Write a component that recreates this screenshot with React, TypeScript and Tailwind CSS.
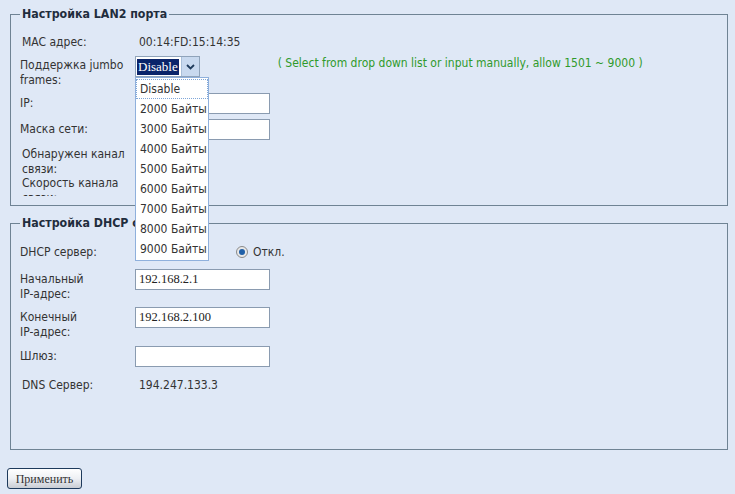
import React from "react";

const labelFont = { fontFamily: '"DejaVu Sans Condensed", "DejaVu Sans", "Liberation Sans", sans-serif' };

function Input({ value }: { value?: string }) {
  return (
    <div className="w-[135px] h-[21px] bg-white border border-[#8a9bb0] flex items-center px-[3px] text-[12.5px] text-[#222] [font-family:'Liberation_Serif',serif]">
      {value}
    </div>
  );
}

export default function App() {
  const options = ["Disable", "2000 Байты", "3000 Байты", "4000 Байты", "5000 Байты", "6000 Байты", "7000 Байты", "8000 Байты", "9000 Байты"];
  return (
    <div
      className="relative w-[735px] h-[494px] bg-[#dfe8f6] text-[#333] text-[12px] overflow-hidden pt-[6px]"
      style={labelFont}
    >
      {/* LAN2 fieldset */}
      <fieldset className="ml-[10px] w-[718px] h-[200px] border border-[#6f8394] pl-[9px] pr-[10px]">
        <legend className="px-[2px] text-[12.3px] font-bold leading-[16px] text-[#1f2d3d] whitespace-nowrap">Настройка LAN2 порта</legend>
        <div className="h-[174px] overflow-hidden pt-[10px]">
          <div className="flex items-center h-[20px] whitespace-nowrap">
            <div className="w-[115px] shrink-0 pl-[2px]">MAC адрес:</div>
            <div className="pl-[4px]">00:14:FD:15:14:35</div>
          </div>
          <div className="flex h-[32px] mt-[4px] whitespace-nowrap">
            <div className="w-[115px] shrink-0 leading-[15px] pt-[2px]">Поддержка jumbo<br />frames:</div>
            <div className="flex h-[21px] border border-[#8fa3ba] bg-white">
              <div className="flex items-center pl-[1px] pr-[2px]">
                <span className="bg-[#0a246a] text-white text-[13px] leading-[16px] px-[1px] [font-family:'Liberation_Serif',serif]">Disable</span>
              </div>
              <div className="w-[18px] h-full bg-[#c8d9ef] border-l border-[#a9bfd9] flex items-center justify-center">
                <svg width="9" height="6" viewBox="0 0 9 6"><path d="M1 1 L4.5 4.5 L8 1" stroke="#1f3b5c" strokeWidth="1.8" fill="none" /></svg>
              </div>
            </div>
            <div className="ml-[78px] leading-[15px] text-[#2f9a2b]">( Select from drop down list or input manually, allow 1501 ~ 9000 )</div>
          </div>
          <div className="flex items-center h-[22px] mt-[4px]">
            <div className="w-[115px] shrink-0">IP:</div>
            <Input />
          </div>
          <div className="flex items-center h-[22px] mt-[4px]">
            <div className="w-[115px] shrink-0">Маска сети:</div>
            <Input />
          </div>
          <div className="mt-[7px] pl-[2px] leading-[14.5px] whitespace-nowrap">
            <div>Обнаружен канал<br />связи:</div>
            <div>Скорость канала<br />связи:</div>
          </div>
        </div>
      </fieldset>

      {/* DHCP fieldset */}
      <fieldset className="ml-[10px] mt-[9px] w-[718px] h-[235px] border border-[#6f8394] pl-[9px] pr-[10px]">
        <legend className="px-[2px] text-[12.3px] font-bold leading-[16px] text-[#1f2d3d] whitespace-nowrap">Настройка DHCP сервера</legend>
        <div className="pt-[11px] whitespace-nowrap">
          <div className="flex items-center h-[20px]">
            <div className="w-[115px] shrink-0">DHCP сервер:</div>
            <div className="flex items-center gap-[5px] ml-[101px]">
              <span className="w-[12px] h-[12px] rounded-full border border-[#8a8a8a] bg-[#e8e8e8] flex items-center justify-center">
                <span className="w-[6px] h-[6px] rounded-full bg-[#1f5fa8]" />
              </span>
              <span>Откл.</span>
            </div>
          </div>
          <div className="flex h-[32px] mt-[7px]">
            <div className="w-[115px] shrink-0 leading-[15px] pt-[3px]">Начальный<br />IP-адрес:</div>
            <Input value="192.168.2.1" />
          </div>
          <div className="flex h-[32px] mt-[6px]">
            <div className="w-[115px] shrink-0 leading-[15px] pt-[3px]">Конечный<br />IP-адрес:</div>
            <Input value="192.168.2.100" />
          </div>
          <div className="flex items-center h-[22px] mt-[6px]">
            <div className="w-[115px] shrink-0">Шлюз:</div>
            <Input />
          </div>
          <div className="flex items-center h-[20px] mt-[8px]">
            <div className="w-[115px] shrink-0 pl-[2px]">DNS Сервер:</div>
            <div className="pl-[4px]">194.247.133.3</div>
          </div>
        </div>
      </fieldset>

      <div className="mt-[18px] ml-[7px]">
        <button className="w-[75px] h-[21px] rounded-[3px] border border-[#1e3a5c] bg-gradient-to-b from-white via-[#eef0f4] to-[#c9cdd4] text-[12px] text-[#333] [font-family:'Liberation_Serif',serif]">
          Применить
        </button>
      </div>

      {/* dropdown list */}
      <div className="absolute left-[135px] top-[77px] w-[74px] bg-white border border-[#8fb0dc] py-[1px] whitespace-nowrap">
        {options.map((o, i) => (
          <div
            key={o}
            className={
              i === 0
                ? "h-[20px] flex items-center px-[3px] border border-dotted border-[#7fa6d8]"
                : "h-[20px] flex items-center px-[4px]"
            }
          >
            {o}
          </div>
        ))}
      </div>
    </div>
  );
}
